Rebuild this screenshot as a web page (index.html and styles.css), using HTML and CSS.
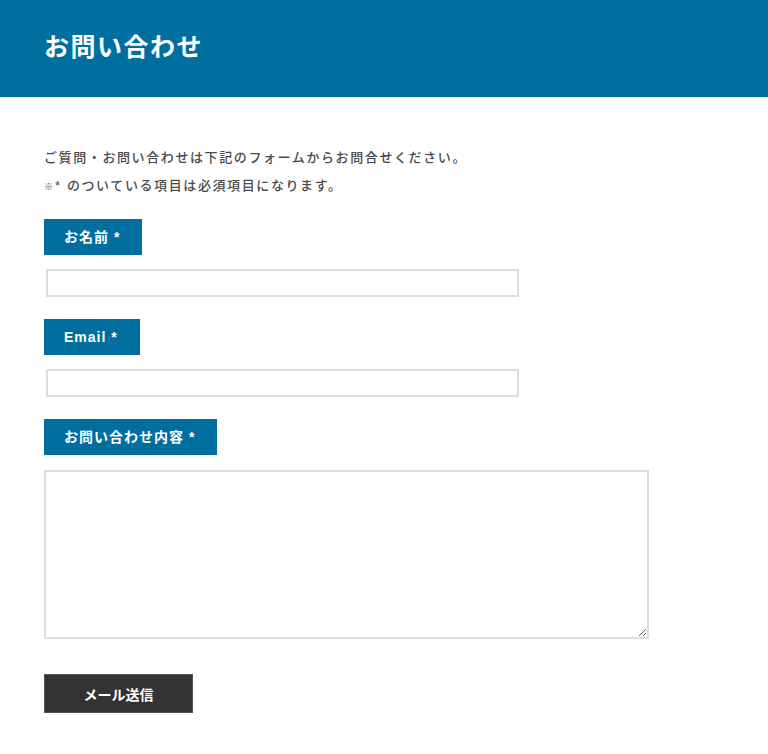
FILE: index.html
```html
<!DOCTYPE html>
<html lang="ja">
<head>
<meta charset="utf-8">
<title>お問い合わせ</title>
<link rel="stylesheet" href="styles.css">
</head>
<body>
<header class="site-header">
  <h1 class="page-title">お問い合わせ</h1>
</header>
<main class="content">
  <div class="intro">
    <p>ご質問・お問い合わせは下記のフォームからお問合せください。</p>
    <p><span class="kome">※</span>* のついている項目は必須項目になります。</p>
  </div>
  <form class="contact-form">
    <div class="field">
      <label class="field-label" for="name">お名前 *</label>
      <input class="text-input" type="text" id="name">
    </div>
    <div class="field">
      <label class="field-label" for="email">Email *</label>
      <input class="text-input" type="email" id="email">
    </div>
    <div class="field">
      <label class="field-label" for="msg">お問い合わせ内容 *</label>
      <textarea class="text-area" id="msg"></textarea>
    </div>
    <button class="submit" type="button">メール送信</button>
  </form>
</main>
</body>
</html>
```
FILE: styles.css
```css
* { box-sizing: border-box; }
html, body { margin: 0; padding: 0; background: #fff; }
body {
  font-family: "Liberation Sans", "Noto Sans CJK JP", sans-serif;
  color: #555;
}
.site-header {
  background: #006f9f;
  height: 97px;
  display: flex;
  align-items: center;
  padding-left: 44px;
}
.page-title {
  margin: 0;
  color: #fff;
  font-size: 25px;
  font-weight: bold;
  letter-spacing: 1.5px;
  line-height: 1;
  padding-bottom: 2px;
}
.content {
  padding: 47px 44px 0 44px;
}
.intro p {
  margin: 0;
  font-size: 13px;
  font-weight: 500;
  line-height: 28px;
  letter-spacing: 1.6px;
  color: #4a4a4a;
}
.kome { font-size: 9px; font-weight: bold; letter-spacing: 0; margin-right: 2px; }
.contact-form {
  display: flex;
  flex-direction: column;
  align-items: flex-start;
  margin-top: 18px;
}
.field {
  display: flex;
  flex-direction: column;
  align-items: flex-start;
  margin-bottom: 22px;
}
.field-label {
  background: #006f9f;
  color: #fff;
  font-size: 14px;
  font-weight: bold;
  height: 36px;
  line-height: 36px;
  padding: 0 22px 0 20px;
  letter-spacing: 1px;
}
.text-input {
  margin: 14px 0 0 2px;
  width: 473px;
  height: 28px;
  border: 2px solid #dedede;
  background: #fff;
  outline: none;
}
.text-area {
  margin-top: 15px;
  width: 605px;
  height: 169px;
  border: 2px solid #dedede;
  background: #fff;
  resize: both;
  outline: none;
}
.field:last-of-type { margin-bottom: 35px; }
.submit {
  width: 149px;
  height: 39px;
  background: #333;
  color: #fff;
  border: 1px solid #555;
  font-family: "Liberation Sans", "Noto Sans CJK JP", sans-serif;
  font-size: 14px;
  font-weight: bold;
  cursor: pointer;
  padding: 0;
}
```
